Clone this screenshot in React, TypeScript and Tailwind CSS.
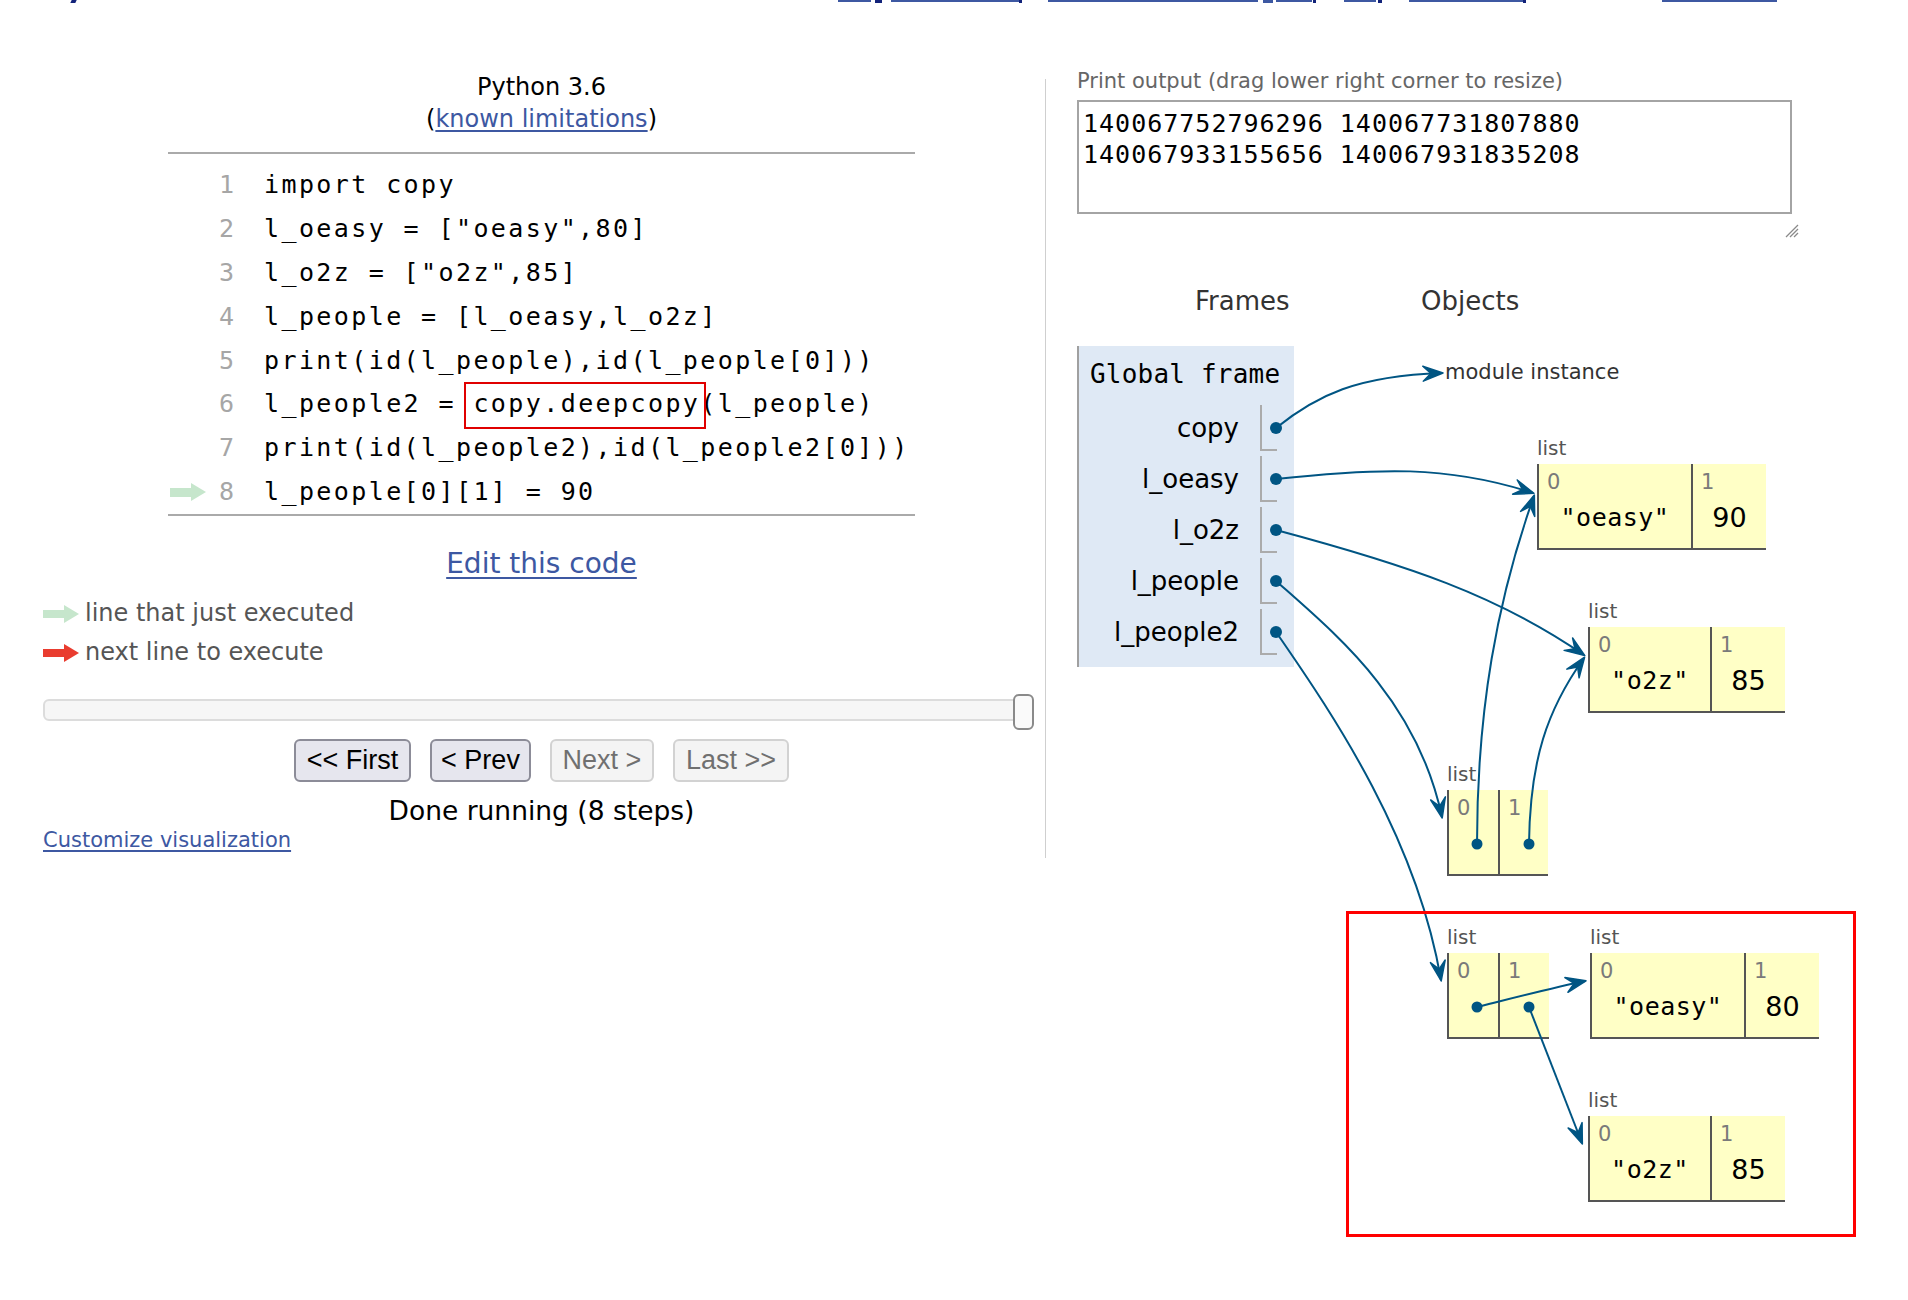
const codeLines = [
  "import copy",
  'l_oeasy = ["oeasy",80]',
  'l_o2z = ["o2z",85]',
  "l_people = [l_oeasy,l_o2z]",
  "print(id(l_people),id(l_people[0]))",
  "l_people2 = copy.deepcopy(l_people)",
  "print(id(l_people2),id(l_people2[0]))",
  "l_people[0][1] = 90",
];

const frameVars = ["copy", "l_oeasy", "l_o2z", "l_people", "l_people2"];

const arrows = [
  "M199,148 C240,115 280,96 365,93",
  "M199,199 C300,188 370,185 456,213",
  "M199,250 C330,285 420,315 507,375",
  "M199,301 C260,355 340,420 365,537",
  "M199,352 C260,440 340,560 364,700",
  "M400,564 C400,430 420,320 457,216",
  "M452,564 C453,480 470,430 507,378",
  "M400,727 C440,717 475,708 508,701",
  "M452,727 L505,863",
];

const dots = [
  [199, 148, 6],
  [199, 199, 6],
  [199, 250, 6],
  [199, 301, 6],
  [199, 352, 6],
  [400, 564, 5.5],
  [452, 564, 5.5],
  [400, 727, 5.5],
  [452, 727, 5.5],
];

type Cell = { idx: string; w: string; val?: string; mono?: boolean };

function ListObj({ pos, cells }: { pos: string; cells: Cell[] }) {
  return (
    <div className={`absolute ${pos} flex flex-col`}>
      <div className="h-[24px] text-[20px] leading-[24px] text-[#555]">list</div>
      <div className="mt-[4px] flex">
        {cells.map((c) => (
          <div
            key={c.idx}
            className={`${c.w} h-[86px] border-l-2 border-b-2 border-[#555] bg-[#ffffc6] flex flex-col`}
          >
            <div className="pl-[8px] pt-[6px] text-[21px] leading-[24px] text-[#7a7a7a]">
              {c.idx}
            </div>
            <div
              className={
                c.mono
                  ? "mt-[8px] h-[32px] text-center leading-[32px] whitespace-pre font-['DejaVu_Sans_Mono',monospace] text-[25px] tracking-[0.5px] text-black"
                  : "mt-[8px] h-[32px] text-center leading-[32px] text-[27px] text-black"
              }
            >
              {c.val}
            </div>
          </div>
        ))}
      </div>
    </div>
  );
}

function LegendArrow({ color }: { color: string }) {
  return (
    <svg width="36" height="18" viewBox="0 0 36 18">
      <rect x="0" y="5" width="23" height="8" fill={color} />
      <polygon points="21,0 36,9 21,18" fill={color} />
    </svg>
  );
}

export default function App() {
  return (
    <div className="relative w-[1908px] h-[1300px] overflow-hidden bg-white font-['DejaVu_Sans',sans-serif] text-black">
      {/* cut-off header links */}
      <div className="flex items-start h-[3px]">
        <span className="ml-[71px] w-[5px] h-[3px] -skew-x-[25deg] bg-[#13237a]" />
        <span className="ml-[762px] w-[33px] h-[2px] bg-[#3d58a2]" />
        <span className="ml-[4px] w-[7px] h-[3px] bg-[#13237a]" />
        <span className="ml-[9px] w-[128px] h-[2px] bg-[#3d58a2]" />
        <span className="w-[3px] h-[3px] bg-[#13237a]" />
        <span className="ml-[26px] w-[210px] h-[2px] bg-[#3d58a2]" />
        <span className="ml-[5px] w-[10px] h-[3px] bg-[#3d58a2]" />
        <span className="ml-[3px] w-[36px] h-[2px] bg-[#3d58a2]" />
        <span className="ml-[1px] w-[3px] h-[3px] bg-[#13237a]" />
        <span className="ml-[28px] w-[32px] h-[2px] bg-[#3d58a2]" />
        <span className="ml-[2px] w-[4px] h-[3px] bg-[#13237a]" />
        <span className="ml-[27px] w-[114px] h-[2px] bg-[#3d58a2]" />
        <span className="w-[3px] h-[3px] bg-[#13237a]" />
        <span className="ml-[136px] w-[115px] h-[2px] bg-[#3d58a2]" />
      </div>

      <div className="flex">
        {/* left column */}
        <div className="ml-[43px] w-[997px] flex flex-col">
          <div className="mt-[68px] text-center text-[24px] leading-[32px]">
            <div>Python 3.6</div>
            <div>
              (<span className="text-[#3d58a2] underline underline-offset-[3px]">known limitations</span>)
            </div>
          </div>

          <div className="mx-auto mt-[17px] w-[747px] border-t-2 border-b-2 border-[#aaa] pt-[9px] font-['DejaVu_Sans_Mono',monospace] text-[25px]">
            {codeLines.map((line, i) => (
              <div key={i} className="flex h-[43.9px] items-center leading-[43.9px]">
                <div className="w-[40px] pl-[2px] flex items-center">
                  {i === 7 && (
                    <svg width="36" height="18" viewBox="0 0 36 18">
                      <rect x="0" y="5" width="23" height="9" fill="#c6e6cc" />
                      <polygon points="21,0 36,9 21,18" fill="#c6e6cc" />
                    </svg>
                  )}
                </div>
                <div className="w-[26px] text-right text-[#a6a6a6]">{i + 1}</div>
                <div className="ml-[30px] whitespace-pre tracking-[2.4px]">
                  {i === 5 ? (
                    <>
                      {"l_people2 = "}
                      <span className="relative inline-block">
                        copy.deepcopy
                        <span className="absolute -left-[9px] -right-[6px] top-0 -bottom-[3px] border-2 border-[#e00000]" />
                      </span>
                      {"(l_people)"}
                    </>
                  ) : (
                    line
                  )}
                </div>
              </div>
            ))}
          </div>

          <div className="mt-[30px] text-center text-[28px] leading-[36px]">
            <span className="text-[#3d58a2] underline underline-offset-[4px]">Edit this code</span>
          </div>

          <div className="mt-[12px] flex flex-col text-[24px] leading-[39px] text-[#555]">
            <div className="flex items-center">
              <LegendArrow color="#c6e6cc" />
              <span className="ml-[6px]">line that just executed</span>
            </div>
            <div className="flex items-center">
              <LegendArrow color="#e93c2f" />
              <span className="ml-[6px]">next line to execute</span>
            </div>
          </div>

          <div className="relative mt-[27px] h-[22px] w-[991px] rounded-[6px] border-2 border-[#dcdcdc] bg-[#f6f6f6]">
            <div className="absolute -right-[2px] -top-[7px] h-[36px] w-[21px] rounded-[6px] border-2 border-[#8a8a8a] bg-[#fafafa]" />
          </div>

          <div className="mt-[18px] flex justify-center gap-[19px] font-['Liberation_Sans',Arial,sans-serif] text-[27px]">
            <div className="flex h-[43px] w-[117px] items-center justify-center rounded-[6px] border-2 border-[#8c8c98] bg-[#e6e6ee]">
              {"<< First"}
            </div>
            <div className="flex h-[43px] w-[101px] items-center justify-center rounded-[6px] border-2 border-[#8c8c98] bg-[#e6e6ee]">
              {"< Prev"}
            </div>
            <div className="flex h-[43px] w-[104px] items-center justify-center rounded-[6px] border-2 border-[#d2d2d2] bg-[#f4f4f4] text-[#707070]">
              {"Next >"}
            </div>
            <div className="flex h-[43px] w-[116px] items-center justify-center rounded-[6px] border-2 border-[#d2d2d2] bg-[#f4f4f4] text-[#707070]">
              {"Last >>"}
            </div>
          </div>

          <div className="mt-[16px] text-center text-[26.5px] leading-[26px]">Done running (8 steps)</div>
          <div className="mt-[6px] text-[21px] leading-[20px]">
            <span className="text-[#3d58a2] underline underline-offset-[3px]">Customize visualization</span>
          </div>
        </div>

        {/* divider */}
        <div className="ml-[5px] mt-[76px] h-[779px] w-[1px] bg-[#cfcfcf]" />

        {/* right column */}
        <div className="ml-[31px] w-[800px] flex flex-col">
          <div className="mt-[65px] text-[21px] leading-[26px] text-[#666]">
            Print output (drag lower right corner to resize)
          </div>
          <div className="mt-[6px] h-[114px] w-[715px] border-2 border-[#a4a4a4] pl-[4px] pt-[7px] font-['DejaVu_Sans_Mono',monospace] text-[25px] leading-[30.5px] tracking-[1px]">
            <div>140067752796296 140067731807880</div>
            <div>140067933155656 140067931835208</div>
          </div>
          <div className="h-[66px] pl-[706px] pt-[8px]">
            <svg width="16" height="16" viewBox="0 0 16 16">
              <line x1="3" y1="15" x2="15" y2="3" stroke="#8a8a8a" strokeWidth="1.2" />
              <line x1="7" y1="15" x2="15" y2="7" stroke="#8a8a8a" strokeWidth="1.2" />
              <line x1="11" y1="15" x2="15" y2="11" stroke="#8a8a8a" strokeWidth="1.2" />
            </svg>
          </div>

          {/* diagram canvas */}
          <div className="relative h-[1000px] w-[800px]">
            <div className="absolute left-[118px] top-[6px] text-[26px] leading-[30px] text-[#333]">Frames</div>
            <div className="absolute left-[344px] top-[6px] text-[26px] leading-[30px] text-[#333]">Objects</div>

            <div className="absolute left-0 top-[66px] h-[321px] w-[217px] border-l-2 border-[#a0a0a0] bg-[#dfe9f5] flex flex-col">
              <div className="mt-[13px] pl-[11px] font-['DejaVu_Sans_Mono',monospace] text-[26px] leading-[30px] tracking-[0.2px]">
                Global frame
              </div>
              <div className="mt-[16px] flex flex-col gap-[5px]">
                {frameVars.map((v) => (
                  <div key={v} className="flex h-[46px] items-center">
                    <div className="w-[160px] text-right text-[26px] leading-[30px]">{v}</div>
                    <div className="ml-[21px] h-[46px] w-[17px] border-l-2 border-b-2 border-[#ababab]" />
                  </div>
                ))}
              </div>
            </div>

            <div className="absolute left-[368px] top-[79px] text-[21px] leading-[26px] text-[#333]">module instance</div>

            <ListObj
              pos="left-[460px] top-[156px]"
              cells={[
                { idx: "0", w: "w-[154px]", val: '"oeasy"', mono: true },
                { idx: "1", w: "w-[75px]", val: "90" },
              ]}
            />
            <ListObj
              pos="left-[511px] top-[319px]"
              cells={[
                { idx: "0", w: "w-[122px]", val: '"o2z"', mono: true },
                { idx: "1", w: "w-[75px]", val: "85" },
              ]}
            />
            <ListObj
              pos="left-[370px] top-[482px]"
              cells={[
                { idx: "0", w: "w-[51px]" },
                { idx: "1", w: "w-[50px]" },
              ]}
            />
            <ListObj
              pos="left-[370px] top-[645px]"
              cells={[
                { idx: "0", w: "w-[51px]" },
                { idx: "1", w: "w-[51px]" },
              ]}
            />
            <ListObj
              pos="left-[513px] top-[645px]"
              cells={[
                { idx: "0", w: "w-[154px]", val: '"oeasy"', mono: true },
                { idx: "1", w: "w-[75px]", val: "80" },
              ]}
            />
            <ListObj
              pos="left-[511px] top-[808px]"
              cells={[
                { idx: "0", w: "w-[122px]", val: '"o2z"', mono: true },
                { idx: "1", w: "w-[75px]", val: "85" },
              ]}
            />

            <svg className="pointer-events-none absolute left-0 top-0" width="800" height="1000">
              <defs>
                <marker
                  id="ah"
                  viewBox="-2 -2 24 19"
                  refX="19"
                  refY="7.5"
                  markerWidth="24"
                  markerHeight="19"
                  markerUnits="userSpaceOnUse"
                  orient="auto"
                >
                  <path
                    d="M0,0 L20,7.5 L0,15 L8,7.5 Z"
                    fill="#005583"
                    stroke="#005583"
                    strokeWidth="1.5"
                    strokeLinejoin="round"
                  />
                </marker>
              </defs>
              {arrows.map((d, i) => (
                <path key={i} d={d} fill="none" stroke="#005583" strokeWidth="2" markerEnd="url(#ah)" />
              ))}
              {dots.map(([x, y, r], i) => (
                <circle key={i} cx={x} cy={y} r={r} fill="#005583" />
              ))}
            </svg>

            <div className="absolute left-[269px] top-[631px] h-[326px] w-[510px] border-[3px] border-[#ff0000]" />
          </div>
        </div>
      </div>
    </div>
  );
}
